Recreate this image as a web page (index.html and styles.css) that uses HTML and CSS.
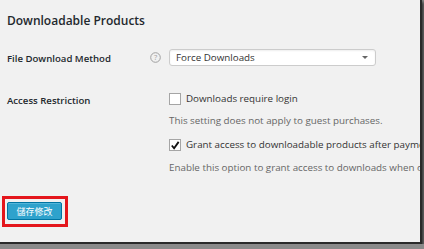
FILE: index.html
```html
<!DOCTYPE html>
<html lang="en">
<head>
    <meta charset="UTF-8">
    <title>Downloadable Products</title>
    <link rel="stylesheet" href="styles.css">
</head>
<body>
    <div class="screen">
        <h2 class="title">Downloadable Products</h2>

        <div class="row row-method">
            <div class="label">File Download Method</div>
            <div class="help">
                <svg width="11" height="11" viewBox="0 0 11 11">
                    <circle cx="5.5" cy="5.5" r="4.8" fill="none" stroke="#a0a0a0" stroke-width="1"/>
                    <text x="5.5" y="8.3" text-anchor="middle" font-size="7.5" fill="#a0a0a0" font-family="Open Sans, sans-serif">?</text>
                </svg>
            </div>
            <div class="field">
                <div class="select">
                    <span>Force Downloads</span>
                    <span class="arrow"></span>
                </div>
            </div>
        </div>

        <div class="row row-access">
            <div class="label">Access Restriction</div>
            <div class="help"></div>
            <div class="field">
                <label class="check"><span class="box"></span>Downloads require login</label>
                <p class="desc">This setting does not apply to guest purchases.</p>
                <label class="check"><span class="box checked">
                    <svg width="11" height="11" viewBox="0 0 11 11"><path d="M2 5.5 L4.5 8.5 L9.5 1.5" fill="none" stroke="#111" stroke-width="2"/></svg>
                </span>Grant access to downloadable products after payment</label>
                <p class="desc last">Enable this option to grant access to downloads when orders are "processing", rather than "completed".</p>
            </div>
        </div>

        <div class="actions">
            <div class="mark">
                <button class="btn">儲存修改</button>
            </div>
        </div>
    </div>
</body>
</html>
```

FILE: styles.css
```css
body {
    margin: 0;
    background: #8a8a8a;
    font-family: "Open Sans", sans-serif;
    color: #333;
}
.screen {
    width: 420px;
    height: 242px;
    background: #f1f1f1;
    border-right: 2px solid #2a2a2a;
    border-bottom: 2px solid #2a2a2a;
    box-shadow: 2px 2px 3px rgba(0, 0, 0, 0.6);
    overflow: hidden;
    white-space: nowrap;
}
.title {
    margin: 0;
    padding: 12px 0 0 7px;
    font-size: 12px;
    font-weight: 600;
    color: #23282d;
    height: 19px;
}
.row {
    display: flex;
}
.row-method {
    margin-top: 18px;
    align-items: center;
}
.row-method .label {
    padding-top: 3px;
}
.row-access {
    margin-top: 26px;
}
.label {
    flex: none;
    width: 143px;
    padding-left: 7px;
    font-size: 9.6px;
    line-height: 14px;
    font-weight: 600;
    color: #23282d;
}
.row-access .label {
    padding-top: 2px;
}
.help {
    flex: none;
    width: 19px;
    display: flex;
}
.help svg {
    display: block;
}
.field {
    flex: none;
    font-size: 9.8px;
    line-height: 14px;
}
.select {
    width: 192px;
    height: 15px;
    border: 1px solid #ccc;
    border-radius: 3px;
    background: #fff;
    display: flex;
    align-items: center;
    justify-content: space-between;
    padding: 0 7px 0 6px;
    color: #333;
    box-shadow: inset 0 1px 2px rgba(0, 0, 0, 0.07);
}
.arrow {
    width: 0;
    height: 0;
    border-left: 3px solid transparent;
    border-right: 3px solid transparent;
    border-top: 3px solid #666;
}
.check {
    display: flex;
    align-items: center;
    color: #333;
}
.box {
    width: 10px;
    height: 10px;
    border: 1px solid #a5a5a5;
    background: #fff;
    margin-right: 5px;
    display: flex;
    align-items: center;
    justify-content: center;
}
.box svg {
    display: block;
}
.desc {
    margin: 8px 0 10px;
    color: #666;
}
.desc.last {
    margin: 9px 0 0;
}
.actions {
    margin-top: 21px;
    padding-left: 2px;
}
.mark {
    display: inline-block;
    border: 3px solid #e4161c;
    padding: 3px 3px 4px 2px;
}
.btn {
    display: block;
    width: 55px;
    height: 18px;
    background: #2ea2cc;
    border: 1px solid #0074a2;
    border-radius: 2px;
    color: #fff;
    font-size: 9px;
    font-family: "Noto Sans CJK TC", sans-serif;
    padding: 0;
    box-shadow: inset 0 1px 0 rgba(120, 200, 230, 0.5);
}
```
